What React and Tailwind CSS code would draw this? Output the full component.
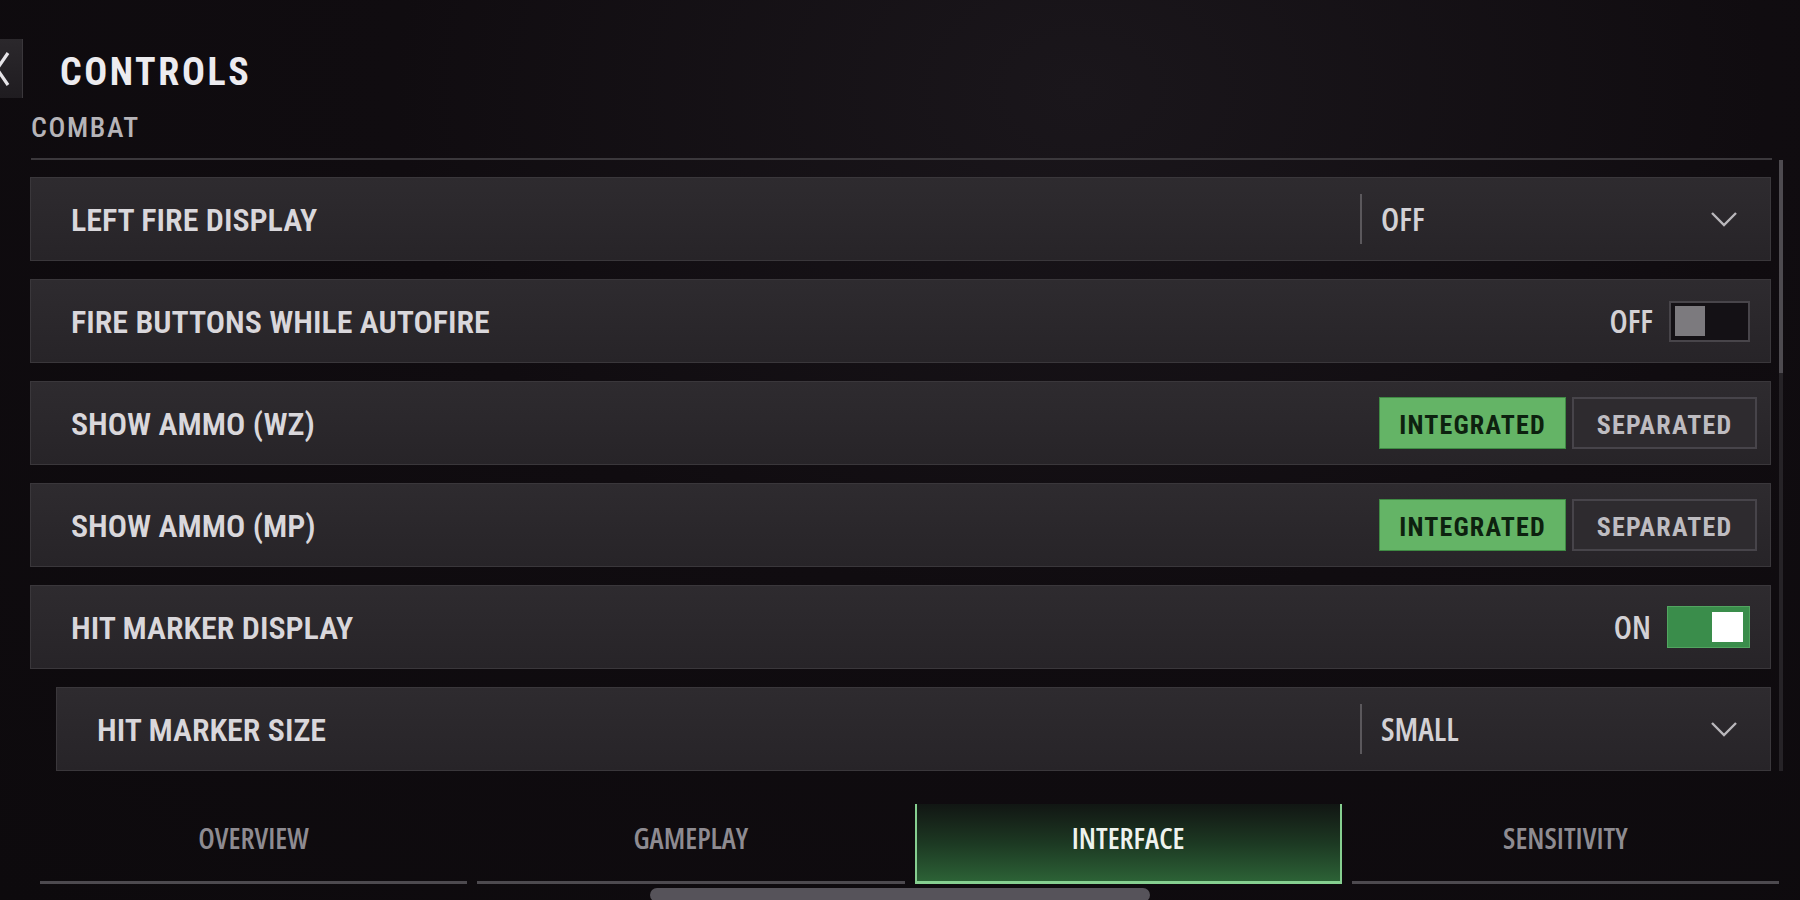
import React from "react";

const RC = "font-['Roboto_Condensed','Roboto','Liberation_Sans',sans-serif]";
const OC = "font-['Open_Sans','Roboto_Condensed',sans-serif] [font-stretch:75%]";

function Chevron() {
  return (
    <svg width="28" height="16" viewBox="0 0 28 16" fill="none" className="shrink-0">
      <polyline points="2,2 14,14 26,2" stroke="#b9b7bb" strokeWidth="2.4" strokeLinejoin="miter" />
    </svg>
  );
}

function Row({ label, indent, children }) {
  return (
    <div
      className={`h-[84px] flex items-center border border-[#3a373b] bg-gradient-to-b from-[#2e2b2f] to-[#272428] ${
        indent ? "ml-[26px]" : ""
      }`}
    >
      <div className={`${RC} pl-[40px] pt-[1px] flex-1 text-[32px] font-semibold leading-none text-[#d9d7db]`}>{label}</div>
      {children}
    </div>
  );
}

function Dropdown({ value }) {
  return (
    <div className="w-[410px] h-full flex items-center">
      <div className="w-[2px] h-[50px] bg-[#5b585c]" />
      <div className={`${OC} ml-[19px] flex-1 text-[32px] font-semibold leading-none text-[#d3d1d5]`}>{value}</div>
      <div className="mr-[32px]">
        <Chevron />
      </div>
    </div>
  );
}

function Toggle({ on }) {
  return (
    <div className="flex items-center mr-[20px]">
      <span className={`${OC} text-[32px] font-semibold leading-none text-[#d3d1d5] mr-[16px]`}>{on ? "ON" : "OFF"}</span>
      {on ? (
        <div className="w-[83px] h-[42px] border border-[#52a560] bg-[#3a8d4b] flex items-center justify-end pr-[6px]">
          <div className="w-[31px] h-[30px] bg-white" />
        </div>
      ) : (
        <div className="w-[81px] h-[41px] border-2 border-[#48454a] bg-[#141115] flex items-center pl-[4px]">
          <div className="w-[30px] h-[30px] bg-[#7c7a7e]" />
        </div>
      )}
    </div>
  );
}

function Segmented() {
  return (
    <div className={`${RC} flex items-center gap-[6px] mr-[13px] text-[26px] font-bold tracking-[1.2px] leading-none`}>
      <div className="w-[187px] h-[52px] pt-[3px] flex items-center justify-center bg-[#64b466] border border-[#3f8a44] text-[#0d210f]">
        INTEGRATED
      </div>
      <div className="w-[185px] h-[52px] pt-[3px] flex items-center justify-center bg-[#2e2b2f] border-2 border-[#47444a] text-[#bebcc1]">
        SEPARATED
      </div>
    </div>
  );
}

function Tab({ label, active }) {
  if (active) {
    return (
      <div className="h-[80px] pb-[11px] flex items-center justify-center border-x-2 border-b-[3px] border-[#86cf90] border-t-0 bg-gradient-to-b from-[#111613] via-[#1c3822] to-[#2c6236]">
        <span className={`${OC} text-[29px] font-semibold leading-none text-[#eef3ee]`}>{label}</span>
      </div>
    );
  }
  return (
    <div className="h-[80px] pb-[11px] flex items-center justify-center border-b-[3px] border-[#4d4a4f]">
      <span className={`${OC} text-[29px] font-semibold leading-none text-[#8e8b91]`}>{label}</span>
    </div>
  );
}

export default function App() {
  return (
    <div className="w-[1800px] h-[900px] overflow-hidden bg-[#0e0b0f] bg-[radial-gradient(ellipse_at_60%_10%,#1a161b_0%,#100c10_45%,#0d0a0d_100%)] flex flex-col">
      {/* header */}
      <div className="h-[98px] pt-[39px] flex items-start">
        <div className="w-[23px] h-[59px] overflow-hidden flex items-center bg-gradient-to-b from-[#2b282c] to-[#1f1c20] border-r border-[#3a373b]">
          <svg width="20" height="40" viewBox="0 0 20 40" fill="none" className="-ml-[10px] shrink-0">
            <polyline points="18,4 7,20 18,36" stroke="#e6e4e8" strokeWidth="3.2" />
          </svg>
        </div>
        <div className={`${RC} ml-[37px] mt-[14px] text-[38px] font-bold leading-none tracking-[2.6px] text-[#ecebef]`}>
          CONTROLS
        </div>
      </div>

      {/* body */}
      <div className="flex ml-[30px] pb-[19px]">
        <div className="w-[1742px] flex flex-col">
          <div className="h-[60px] flex items-center">
            <span className={`${RC} pl-[1px] text-[28px] font-medium leading-none tracking-[1.6px] text-[#b6b4b8]`}>COMBAT</span>
          </div>
          <div className="h-[2px] ml-[1px] bg-[#3b383c]" />
          <div className="pt-[17px] flex flex-col gap-[18px] w-[1741px]">
            <Row label="LEFT FIRE DISPLAY">
              <Dropdown value="OFF" />
            </Row>
            <Row label="FIRE BUTTONS WHILE AUTOFIRE">
              <Toggle on={false} />
            </Row>
            <Row label="SHOW AMMO (WZ)">
              <Segmented />
            </Row>
            <Row label="SHOW AMMO (MP)">
              <Segmented />
            </Row>
            <Row label="HIT MARKER DISPLAY">
              <Toggle on />
            </Row>
            <Row label="HIT MARKER SIZE" indent>
              <Dropdown value="SMALL" />
            </Row>
          </div>
        </div>
        <div className="ml-[7px] w-[4px] flex flex-col pt-[62px]">
          <div className="h-[213px] bg-[#4e4b50]" />
          <div className="flex-1 bg-[#262327]" />
        </div>
      </div>

      {/* tabs */}
      <div className="mt-[14px] ml-[40px] w-[1739px] grid grid-cols-4 gap-[10px]">
        <Tab label="OVERVIEW" />
        <Tab label="GAMEPLAY" />
        <Tab label="INTERFACE" active />
        <Tab label="SENSITIVITY" />
      </div>
      <div className="mt-[4px] ml-[650px] w-[500px] h-[14px] rounded-full bg-[#56535a] shrink-0" />
    </div>
  );
}
